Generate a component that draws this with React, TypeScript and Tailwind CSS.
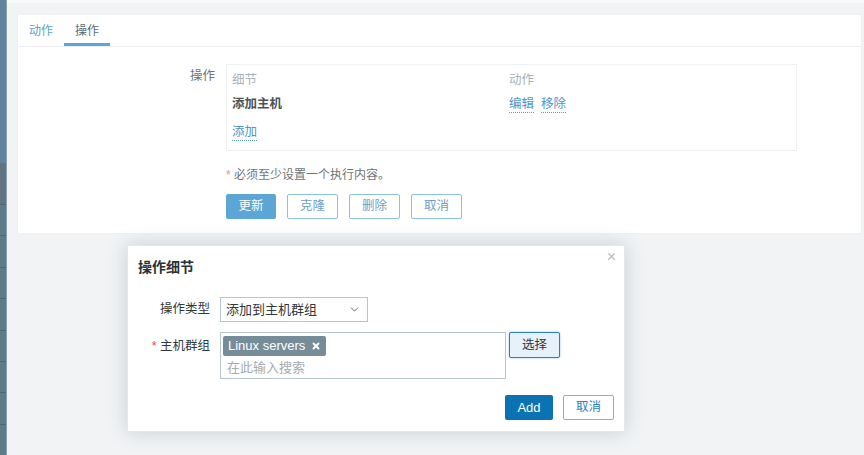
import { ChevronDown, X } from "lucide-react";

const font = { fontFamily: '"Liberation Sans", Arial, "Noto Sans CJK SC", sans-serif' };

function Sidebar() {
  const rows = Array.from({ length: 8 });
  return (
    <div className="flex w-[7px] shrink-0 flex-col border-r border-[#8aa3b3]">
      <div className="h-[172px] bg-[#5f849c]" />
      <div className="h-[43px] bg-[#627481]" />
      {rows.map((_, i) => (
        <div key={i} className="h-[33px] border-t border-[#4e6675] bg-[#5e7b8c]" />
      ))}
    </div>
  );
}

function LinkText({ children }: { children: React.ReactNode }) {
  return (
    <span className="border-b border-dotted border-[#5b9bc8] leading-[15px] text-[#4d96c8]">{children}</span>
  );
}

function OperationsCard() {
  return (
    <section className="ml-[10px] mr-[2px] h-[220px] border border-[#eef0f2] bg-white">
      <div className="flex h-[32px] border-b border-[#ebeef0]">
        <div className="flex items-center px-[11px] text-[12px] text-[#5a9fd0]">动作</div>
        <div className="flex items-center border-b-[3px] border-[#5ba6d4] px-[11px] pt-[3px] text-[12px] text-[#5c6b73]">
          操作
        </div>
      </div>
      <div className="flex pt-[17px]">
        <div className="w-[208px] pr-[11px] pt-[3px] text-right text-[12.5px] text-[#6b7478]">操作</div>
        <div className="flex flex-col">
          <div className="h-[87px] w-[571px] border border-[#eef0f2] px-[5px] pt-[7px] text-[12.5px]">
            <div className="flex h-[17px] items-center text-[#a8b2b7]">
              <div className="w-[277px]">细节</div>
              <div>动作</div>
            </div>
            <div className="mt-[7px] flex h-[17px] items-center">
              <div className="w-[277px] font-bold text-[#4a5459]">添加主机</div>
              <div className="flex gap-[7px]">
                <LinkText>编辑</LinkText>
                <LinkText>移除</LinkText>
              </div>
            </div>
            <div className="mt-[11px] flex h-[17px] items-center">
              <LinkText>添加</LinkText>
            </div>
          </div>
          <div className="mt-[15px] text-[12px] text-[#6b7478]">
            <span className="text-[#e98a8a]">*</span> 必须至少设置一个执行内容。
          </div>
          <div className="mt-[10px] flex gap-[11px]">
            <button className="h-[25px] w-[50px] rounded-[2px] bg-[#5ba6d4] text-[12.5px] text-white">更新</button>
            {["克隆", "删除", "取消"].map((t) => (
              <button
                key={t}
                className="h-[25px] w-[51px] rounded-[2px] border border-[#8fc0df] bg-white text-[12.5px] text-[#6d9fc4]"
              >
                {t}
              </button>
            ))}
          </div>
        </div>
      </div>
    </section>
  );
}

function Dialog() {
  return (
    <div className="absolute left-[127px] top-[245px] h-[187px] w-[498px] border border-[#e4e8eb] bg-white shadow-[0_0_18px_rgba(60,80,95,0.22)]">
      <button className="absolute right-[7px] top-[5px] text-[#b9c3c8]">
        <X size={11} strokeWidth={3.2} />
      </button>
      <div className="px-[10px] pt-[11px] text-[14px] font-bold text-[#2a3236]">操作细节</div>
      <div className="mt-[19px] flex items-center">
        <div className="w-[92px] pr-[10px] text-right text-[12.5px] text-[#2f383c]">操作类型</div>
        <div className="flex h-[25px] w-[148px] items-center justify-between border border-[#b8c6cd] pl-[5px] pr-[6px] text-[13px] text-[#2f383c]">
          <span>添加到主机群组</span>
          <ChevronDown size={13} strokeWidth={1.6} className="text-[#4b555a]" />
        </div>
      </div>
      <div className="mt-[10px] flex items-start">
        <div className="w-[92px] pr-[10px] pt-[5px] text-right text-[12.5px] text-[#2f383c]">
          <span className="text-[#e44b4b]">*</span> 主机群组
        </div>
        <div className="flex h-[47px] w-[286px] flex-col items-start border border-[#b8c6cd] pl-[2px] pt-[3px]">
          <div className="flex h-[20px] shrink-0 items-center gap-[6px] whitespace-nowrap rounded-[2px] bg-[#768d99] px-[5px] text-[13px] text-white">
            <span>Linux servers</span>
            <X size={10} strokeWidth={4.5} />
          </div>
          <div className="pl-[4px] pt-[2px] text-[13px] text-[#a3adb2]">在此输入搜索</div>
        </div>
        <button className="ml-[3px] h-[26px] w-[51px] rounded-[2px] border border-[#2c7fbf] bg-[#e6f1fb] text-[12.5px] text-[#2f383c] shadow-[0_0_2px_rgba(2,117,184,0.5)]">
          选择
        </button>
      </div>
      <div className="mt-[16px] flex justify-end gap-[10px] pr-[10px]">
        <button className="h-[25px] w-[48px] rounded-[2px] bg-[#0b72b3] text-[13px] text-white">Add</button>
        <button className="h-[25px] w-[51px] rounded-[2px] border border-[#7fb2d6] bg-white text-[12.5px] text-[#2c7fbf]">
          取消
        </button>
      </div>
    </div>
  );
}

export default function App() {
  return (
    <div className="relative flex h-[455px] w-[864px] overflow-hidden bg-[#f1f3f5]" style={font}>
      <Sidebar />
      <main className="flex-1">
        <div className="h-[3px] bg-[#f8f9fa]" />
        <div className="pt-[11px]">
          <OperationsCard />
        </div>
      </main>
      <Dialog />
    </div>
  );
}
